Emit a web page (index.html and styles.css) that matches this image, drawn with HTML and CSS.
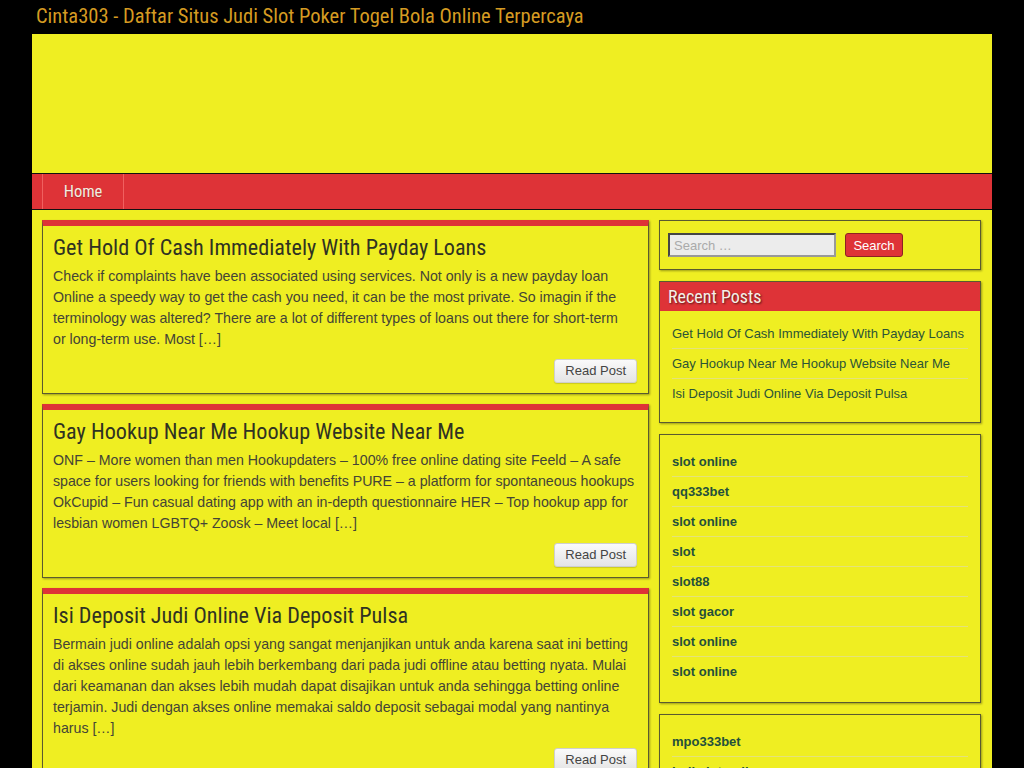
FILE: index.html
```html
<!DOCTYPE html>
<html lang="id">
<head>
    <meta charset="UTF-8">
    <meta name="viewport" content="width=device-width, initial-scale=1.0">
    <title>Cinta303 - Daftar Situs Judi Slot Poker Togel Bola Online Terpercaya</title>
    <link rel="stylesheet" href="styles.css">
</head>
<body>
    <div class="site">
        <div class="site-title">
            <a href="#">Cinta303 - Daftar Situs Judi Slot Poker Togel Bola Online Terpercaya</a>
        </div>

        <div class="wrapper">
            <header class="masthead"></header>

            <!-- main menu -->
            <nav class="main-nav">
                <ul>
                    <li><a href="#">Home</a></li>
                </ul>
            </nav>

            <div class="content">
                <main class="posts">
                    <article class="post">
                        <h2 class="post-title"><a href="#">Get Hold Of Cash Immediately With Payday Loans</a></h2>
                        <p class="excerpt">Check if complaints have been associated using services. Not only is a new payday loan Online a speedy way to get the cash you need, it can be the most private. So imagin if the terminology was altered? There are a lot of different types of loans out there for short-term<br>or long-term use. Most […]</p>
                        <div class="more"><a href="#" class="read-btn">Read Post</a></div>
                    </article>

                    <article class="post">
                        <h2 class="post-title"><a href="#">Gay Hookup Near Me Hookup Website Near Me</a></h2>
                        <p class="excerpt">ONF – More women than men Hookupdaters – 100% free online dating site Feeld – A safe space for users looking for friends with benefits PURE – a platform for spontaneous hookups OkCupid – Fun casual dating app with an in-depth questionnaire HER – Top hookup app for lesbian women LGBTQ+ Zoosk – Meet local […]</p>
                        <div class="more"><a href="#" class="read-btn">Read Post</a></div>
                    </article>

                    <article class="post">
                        <h2 class="post-title"><a href="#">Isi Deposit Judi Online Via Deposit Pulsa</a></h2>
                        <p class="excerpt">Bermain judi online adalah opsi yang sangat menjanjikan untuk anda karena saat ini betting di akses online sudah jauh lebih berkembang dari pada judi offline atau betting nyata. Mulai dari keamanan dan akses lebih mudah dapat disajikan untuk anda sehingga betting online terjamin. Judi dengan akses online memakai saldo deposit sebagai modal yang nantinya harus […]</p>
                        <div class="more"><a href="#" class="read-btn">Read Post</a></div>
                    </article>
                </main>

                <aside class="sidebar">
                    <div class="widget search-widget">
                        <form class="search-form">
                            <input type="search" class="search-field" placeholder="Search …">
                            <button type="submit" class="search-submit">Search</button>
                        </form>
                    </div>

                    <div class="widget recent-widget">
                        <h3 class="widget-title">Recent Posts</h3>
                        <ul class="widget-list">
                            <li><a href="#">Get Hold Of Cash Immediately With Payday Loans</a></li>
                            <li><a href="#">Gay Hookup Near Me Hookup Website Near Me</a></li>
                            <li><a href="#">Isi Deposit Judi Online Via Deposit Pulsa</a></li>
                        </ul>
                    </div>

                    <div class="widget">
                        <ul class="widget-list bold">
                            <li><a href="#">slot online</a></li>
                            <li><a href="#">qq333bet</a></li>
                            <li><a href="#">slot online</a></li>
                            <li><a href="#">slot</a></li>
                            <li><a href="#">slot88</a></li>
                            <li><a href="#">slot gacor</a></li>
                            <li><a href="#">slot online</a></li>
                            <li><a href="#">slot online</a></li>
                        </ul>
                    </div>

                    <div class="widget">
                        <ul class="widget-list bold">
                            <li><a href="#">mpo333bet</a></li>
                            <li><a href="#">judi slot online</a></li>
                            <li><a href="#">slot online</a></li>
                        </ul>
                    </div>
                </aside>
            </div>
        </div>
    </div>
</body>
</html>
```

FILE: styles.css
```css
body {
    margin: 0;
    padding: 0;
    background-color: #000;
    font-family: "Liberation Sans", Arial, sans-serif;
    font-size: 14px;
    color: #3d3d2a;
}
a {
    text-decoration: none;
}
.site {
    width: 960px;
    margin: 0 auto;
}
.site-title {
    height: 34px;
    padding-left: 4px;
    font-family: "Roboto Condensed", "Liberation Sans Narrow", Roboto, sans-serif;
    font-stretch: condensed;
    font-size: 20.5px;
    line-height: 32px;
}
.site-title a {
    color: #d59b22;
}
.wrapper {
    background-color: #efee22;
    padding-bottom: 20px;
}
.masthead {
    height: 139px;
}
.main-nav {
    background-color: #de3337;
    border-top: 1px solid #111;
    border-bottom: 1px solid #111;
    height: 35px;
    padding-left: 10px;
}
.main-nav ul {
    list-style: none;
    margin: 0;
    padding: 0;
    display: flex;
}
.main-nav li a {
    display: block;
    width: 80px;
    text-align: center;
    line-height: 35px;
    color: #f2eee0;
    font-family: "Roboto Condensed", "Liberation Sans Narrow", Roboto, sans-serif;
    font-size: 16.5px;
    border-left: 1px solid #f0605f;
    border-right: 1px solid #f0605f;
    text-shadow: 0 1px 1px rgba(0,0,0,0.25);
}
.content {
    display: flex;
    gap: 10px;
    padding: 10px 11px 0 10px;
}
.posts {
    width: 607px;
}
.post {
    border: 1px solid #5a5a30;
    border-top: 6px solid #de3337;
    box-shadow: 1px 1px 2px rgba(0,0,0,0.35);
    padding: 6px 11px 10px 10px;
    margin-bottom: 10px;
}
.post-title {
    margin: 0;
    font-family: "Roboto Condensed", "Liberation Sans Narrow", Roboto, sans-serif;
    font-stretch: condensed;
    font-weight: normal;
    font-size: 22.2px;
    line-height: 30px;
}
.post-title a {
    color: #2f3222;
}
.excerpt {
    margin: 4px 0 9px;
    line-height: 21px;
    font-size: 14.2px;
    color: #444436;
}
.more {
    display: flex;
    justify-content: flex-end;
}
.read-btn {
    display: inline-block;
    padding: 0 10px;
    line-height: 22px;
    font-size: 13px;
    color: #444;
    background: linear-gradient(#fafafa, #e4e4e4);
    border: 1px solid #cfcfcf;
    border-radius: 3px;
    box-shadow: 0 1px 1px rgba(0,0,0,0.15);
}
.sidebar {
    width: 322px;
}
.widget {
    border: 1px solid #5a5a30;
    box-shadow: 1px 1px 2px rgba(0,0,0,0.35);
    margin-bottom: 11px;
    padding-bottom: 16px;
}
.recent-widget {
    padding-bottom: 14px;
}
.search-widget {
    padding: 12px 9px 12px 8px;
}
.search-form {
    display: flex;
    gap: 9px;
}
.search-field {
    width: 168px;
    height: 24px;
    box-sizing: border-box;
    border: 2px solid #999;
    border-style: inset;
    background-color: #ececec;
    font-family: "Liberation Sans", Arial, sans-serif;
    font-size: 13px;
    padding: 0 4px;
}
.search-field::placeholder {
    color: #aaa;
}
.search-submit {
    height: 24px;
    width: 58px;
    border: 1px solid #8c2222;
    border-radius: 3px;
    background-color: #de3337;
    color: #fff;
    font-family: "Liberation Sans", Arial, sans-serif;
    font-size: 13px;
    padding: 0;
}
.widget-title {
    margin: 0 0 8px;
    height: 29px;
    background-color: #de3337;
    padding-left: 8px;
    color: #f4f0e8;
    font-family: "Roboto Condensed", "Liberation Sans Narrow", Roboto, sans-serif;
    font-stretch: condensed;
    font-weight: normal;
    font-size: 18px;
    line-height: 29px;
    text-shadow: 1px 1px 2px rgba(0,0,0,0.6);
}
.widget-list {
    list-style: none;
    margin: 0;
    padding: 0 12px;
}
.widget-list.bold {
    padding-top: 12px;
}
.widget-list li {
    border-bottom: 1px solid #e4e27a;
    line-height: 29px;
    font-size: 13px;
}
.widget-list li:last-child {
    border-bottom: none;
}
.widget-list a {
    color: #2b5437;
}
.widget-list.bold a {
    font-weight: bold;
    color: #24503c;
}
```
